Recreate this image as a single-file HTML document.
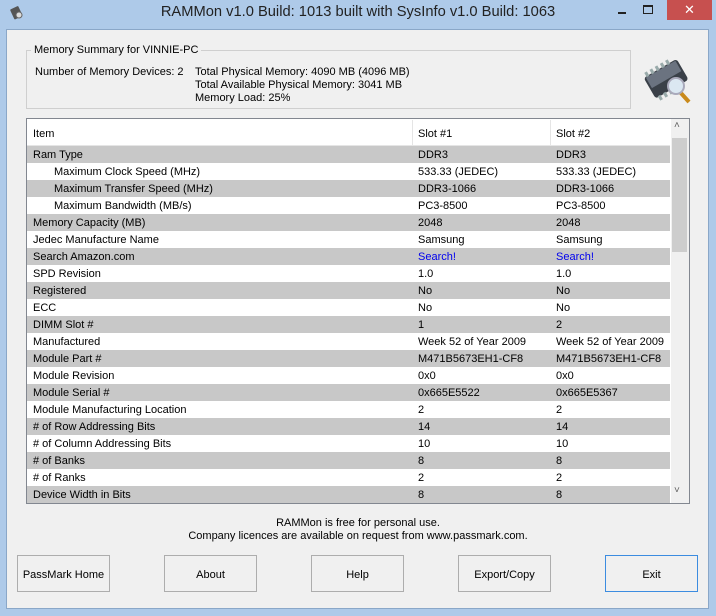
<!DOCTYPE html>
<html><head><meta charset="utf-8"><style>
*{margin:0;padding:0;box-sizing:border-box}
body{width:716px;height:616px;background:#aecae9;font-family:"Liberation Sans",sans-serif;font-size:11px;color:#000;position:relative;overflow:hidden}
.a{position:absolute}
#client{left:6px;top:29px;width:703px;height:580px;background:#f0f0f0;border:1px solid #8aa7c8}
.title{left:0;top:4px;width:716px;text-align:center;font-size:14.7px;color:#222}
.grp{left:26px;top:50px;width:605px;height:59px;border:1px solid #cfcfcf}
.tbl{left:26px;top:118px;width:664px;height:386px;border:1px solid #828790;background:#fff}
.row{position:absolute;left:0;width:643px;height:17px;line-height:19px}
.g{background:#c8c8c8}
.row span{position:absolute;top:0;white-space:nowrap}
.c1{left:6px}.c2{left:391px}.c3{left:529px}
.btn{position:absolute;top:555px;width:93px;height:37px;border:1px solid #adadad;background:#f0f0f0;text-align:center;line-height:38px;font-size:11px}
.blue{color:#0000ee}
</style></head><body>
<svg class="a" style="left:8px;top:4px" width="18" height="18" viewBox="0 0 18 18"><rect x="4" y="3" width="9" height="11" rx="1" fill="#555" transform="rotate(-25 9 9)"/><circle cx="11" cy="11" r="3" fill="#ddd" stroke="#666"/></svg>
<div class="a title">RAMMon v1.0 Build: 1013 built with SysInfo v1.0 Build: 1063</div>
<div class="a" style="left:618px;top:12px;width:8px;height:2px;background:#222"></div>
<div class="a" style="left:643px;top:5px;width:10px;height:9px;border:1px solid #222;border-top-width:2px"></div>
<div class="a" style="left:667px;top:0;width:45px;height:20px;background:#c7504f;color:#fff;text-align:center;font-size:13px;line-height:19px">✕</div>
<div class="a" id="client"></div>
<div class="a grp"></div>
<div class="a" style="left:31px;top:44px;background:#f0f0f0;padding:0 3px">Memory Summary for VINNIE-PC</div>
<div class="a" style="left:35px;top:66px">Number of Memory Devices: 2</div>
<div class="a" style="left:195px;top:66px;line-height:13px">Total Physical Memory: 4090 MB (4096 MB)<br>Total Available Physical Memory: 3041 MB<br>Memory Load: 25%</div>
<svg class="a" style="left:640px;top:52px" width="60" height="56" viewBox="0 0 60 56">
<g transform="rotate(-30 28 28)"><rect x="8" y="14" width="38" height="24" rx="3" fill="#3a4048"/><rect x="10" y="15" width="34" height="12" fill="#6b7380"/>
<g fill="#9aa"><rect x="11" y="10" width="3" height="5"/><rect x="17" y="10" width="3" height="5"/><rect x="23" y="10" width="3" height="5"/><rect x="29" y="10" width="3" height="5"/><rect x="35" y="10" width="3" height="5"/><rect x="11" y="37" width="3" height="5"/><rect x="17" y="37" width="3" height="5"/><rect x="23" y="37" width="3" height="5"/><rect x="29" y="37" width="3" height="5"/><rect x="35" y="37" width="3" height="5"/></g></g>
<line x1="40" y1="40" x2="49" y2="50" stroke="#c98a1c" stroke-width="4"/>
<circle cx="36" cy="34" r="8" fill="#dbe8f2" stroke="#aab" stroke-width="2"/>
</svg>
<div class="a tbl">
<div class="row" style="top:1px;height:26px;line-height:28px;background:#fff;border-bottom:1px solid #e5e5e5"><span class="c1">Item</span><span class="c2">Slot #1</span><span class="c3">Slot #2</span></div>
<div class="a" style="left:385px;top:1px;width:1px;height:25px;background:#e5e5e5"></div>
<div class="a" style="left:523px;top:1px;width:1px;height:25px;background:#e5e5e5"></div>
<div class="row g" style="top:27px"><span class="c1">Ram Type</span><span class="c2">DDR3</span><span class="c3">DDR3</span></div>
<div class="row" style="top:44px"><span class="c1" style="left:27px">Maximum Clock Speed (MHz)</span><span class="c2">533.33 (JEDEC)</span><span class="c3">533.33 (JEDEC)</span></div>
<div class="row g" style="top:61px"><span class="c1" style="left:27px">Maximum Transfer Speed (MHz)</span><span class="c2">DDR3-1066</span><span class="c3">DDR3-1066</span></div>
<div class="row" style="top:78px"><span class="c1" style="left:27px">Maximum Bandwidth (MB/s)</span><span class="c2">PC3-8500</span><span class="c3">PC3-8500</span></div>
<div class="row g" style="top:95px"><span class="c1">Memory Capacity (MB)</span><span class="c2">2048</span><span class="c3">2048</span></div>
<div class="row" style="top:112px"><span class="c1">Jedec Manufacture Name</span><span class="c2">Samsung</span><span class="c3">Samsung</span></div>
<div class="row g" style="top:129px"><span class="c1">Search Amazon.com</span><span class="c2 blue">Search!</span><span class="c3 blue">Search!</span></div>
<div class="row" style="top:146px"><span class="c1">SPD Revision</span><span class="c2">1.0</span><span class="c3">1.0</span></div>
<div class="row g" style="top:163px"><span class="c1">Registered</span><span class="c2">No</span><span class="c3">No</span></div>
<div class="row" style="top:180px"><span class="c1">ECC</span><span class="c2">No</span><span class="c3">No</span></div>
<div class="row g" style="top:197px"><span class="c1">DIMM Slot #</span><span class="c2">1</span><span class="c3">2</span></div>
<div class="row" style="top:214px"><span class="c1">Manufactured</span><span class="c2">Week 52 of Year 2009</span><span class="c3">Week 52 of Year 2009</span></div>
<div class="row g" style="top:231px"><span class="c1">Module Part #</span><span class="c2">M471B5673EH1-CF8</span><span class="c3">M471B5673EH1-CF8</span></div>
<div class="row" style="top:248px"><span class="c1">Module Revision</span><span class="c2">0x0</span><span class="c3">0x0</span></div>
<div class="row g" style="top:265px"><span class="c1">Module Serial #</span><span class="c2">0x665E5522</span><span class="c3">0x665E5367</span></div>
<div class="row" style="top:282px"><span class="c1">Module Manufacturing Location</span><span class="c2">2</span><span class="c3">2</span></div>
<div class="row g" style="top:299px"><span class="c1"># of Row Addressing Bits</span><span class="c2">14</span><span class="c3">14</span></div>
<div class="row" style="top:316px"><span class="c1"># of Column Addressing Bits</span><span class="c2">10</span><span class="c3">10</span></div>
<div class="row g" style="top:333px"><span class="c1"># of Banks</span><span class="c2">8</span><span class="c3">8</span></div>
<div class="row" style="top:350px"><span class="c1"># of Ranks</span><span class="c2">2</span><span class="c3">2</span></div>
<div class="row g" style="top:367px"><span class="c1">Device Width in Bits</span><span class="c2">8</span><span class="c3">8</span></div>
<div class="a" style="left:644px;top:0;width:18px;height:384px;background:#f0f0f0"></div>
<div class="a" style="left:645px;top:19px;width:15px;height:114px;background:#cdcdcd"></div>
<div class="a" style="left:647px;top:1px;font-size:10px;color:#606060">&#x2C4;</div>
<div class="a" style="left:647px;top:366px;font-size:10px;color:#606060">&#x2C5;</div>
</div>
<div class="a" style="left:0;top:517px;width:716px;text-align:center;line-height:13px">RAMMon is free for personal use.<br>Company licences are available on request from www.passmark.com.</div>
<div class="btn" style="left:17px">PassMark Home</div>
<div class="btn" style="left:164px">About</div>
<div class="btn" style="left:311px">Help</div>
<div class="btn" style="left:458px">Export/Copy</div>
<div class="btn" style="left:605px;border-color:#3c8ce0">Exit</div>
</body></html>
